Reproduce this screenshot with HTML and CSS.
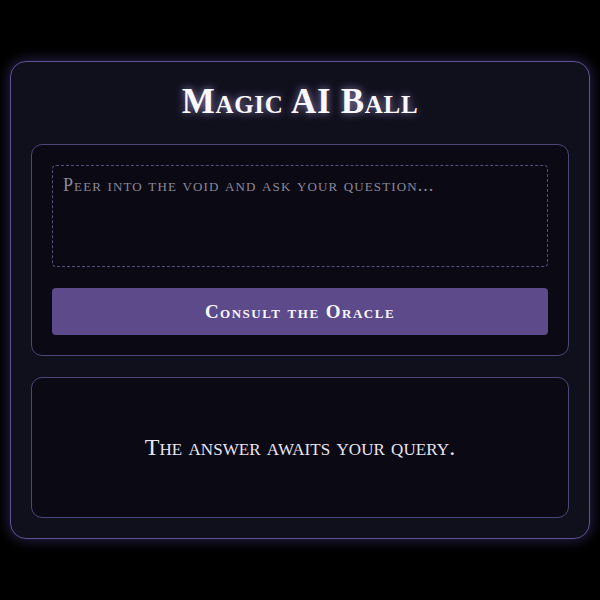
FILE: index.html
```html
<!DOCTYPE html>
<html lang="en">
<head>
<meta charset="utf-8">
<title>Magic AI Ball</title>
<link rel="stylesheet" href="styles.css">
</head>
<body>
<main class="card">
  <h1 class="title">Magic AI Ball</h1>
  <section class="panel ask">
    <textarea class="question" placeholder="Peer into the void and ask your question..."></textarea>
    <button class="consult" type="button">Consult the Oracle</button>
  </section>
  <section class="panel answer">
    <p class="answer-text">The answer awaits your query.</p>
  </section>
</main>
</body>
</html>
```
FILE: styles.css
```css
html, body {
  margin: 0;
  padding: 0;
  height: 100%;
  background: #000;
}
body {
  display: flex;
  align-items: center;
  justify-content: center;
  font-family: "Liberation Serif", "DejaVu Serif", serif;
  font-variant: small-caps;
  color: #e6e2f0;
}
.card {
  box-sizing: border-box;
  width: 580px;
  height: 478px;
  padding: 20px;
  background: #100f1c;
  border: 1.5px solid #5e5494;
  border-radius: 16px;
  box-shadow: 0 0 14px rgba(110, 90, 200, 0.45);
  display: flex;
  flex-direction: column;
}
.title {
  margin: 0 0 22px;
  line-height: 40px;
  text-align: center;
  font-size: 35px;
  font-weight: bold;
  color: #fbf9ff;
  letter-spacing: 0.7px;
  text-shadow: 0 0 8px rgba(200, 190, 255, 0.7);
}
.panel {
  box-sizing: border-box;
  background: #0b0a14;
  border: 1px solid #4c4678;
  border-radius: 11px;
  padding: 20px;
}
.ask {
  display: flex;
  flex-direction: column;
  gap: 21px;
}
.question {
  box-sizing: border-box;
  height: 102px;
  resize: none;
  background: #0b0a14;
  border: 1px dashed #55507c;
  border-radius: 4px;
  padding: 9px 10px;
  font-family: inherit;
  font-variant: small-caps;
  font-size: 18px;
  letter-spacing: 1.1px;
  color: #e6e2f0;
  outline: none;
}
.question::placeholder {
  color: #8b8898;
}
.consult {
  height: 47px;
  border: none;
  border-radius: 4px;
  background: #5c4a8b;
  color: #fbf9ff;
  font-family: inherit;
  font-variant: small-caps;
  font-weight: bold;
  font-size: 19px;
  letter-spacing: 1.5px;
}
.answer {
  margin-top: 21px;
  flex: 1;
  display: flex;
  align-items: center;
  justify-content: center;
}
.answer-text {
  margin: 0;
  font-size: 24px;
  letter-spacing: 0.1px;
  color: #e9e5f2;
}
```
